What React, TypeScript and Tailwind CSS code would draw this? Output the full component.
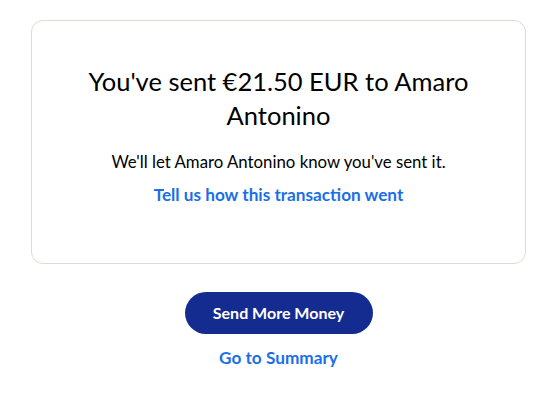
export default function App() {
  return (
    <div className="min-h-[417px] w-full bg-white px-[31px] pt-[20px] font-['Lato',sans-serif] text-[#000000]">
      <div className="flex w-[495px] flex-col items-center rounded-[12px] border border-[#dcdbd5] px-[40px] pb-[56px] pt-[43px] text-center">
        <h1 className="text-[25.5px] leading-[34px] font-normal">You've sent €21.50 EUR to Amaro Antonino</h1>
        <p className="mt-[18px] text-[16.8px] leading-[24px]">We'll let Amaro Antonino know you've sent it.</p>
        <a className="mt-[9px] text-[17.2px] leading-[24px] font-bold text-[#1a6fe6]">Tell us how this transaction went</a>
      </div>
      <div className="flex w-[495px] flex-col items-center pt-[28px]">
        <button
          type="button"
          className="h-[42px] w-[188px] rounded-full bg-[#142b8f] text-[16px] font-bold text-white"
        >
          Send More Money
        </button>
        <a className="mt-[12px] text-[17.2px] leading-[24px] font-bold text-[#1a6fe6]">Go to Summary</a>
      </div>
    </div>
  );
}
